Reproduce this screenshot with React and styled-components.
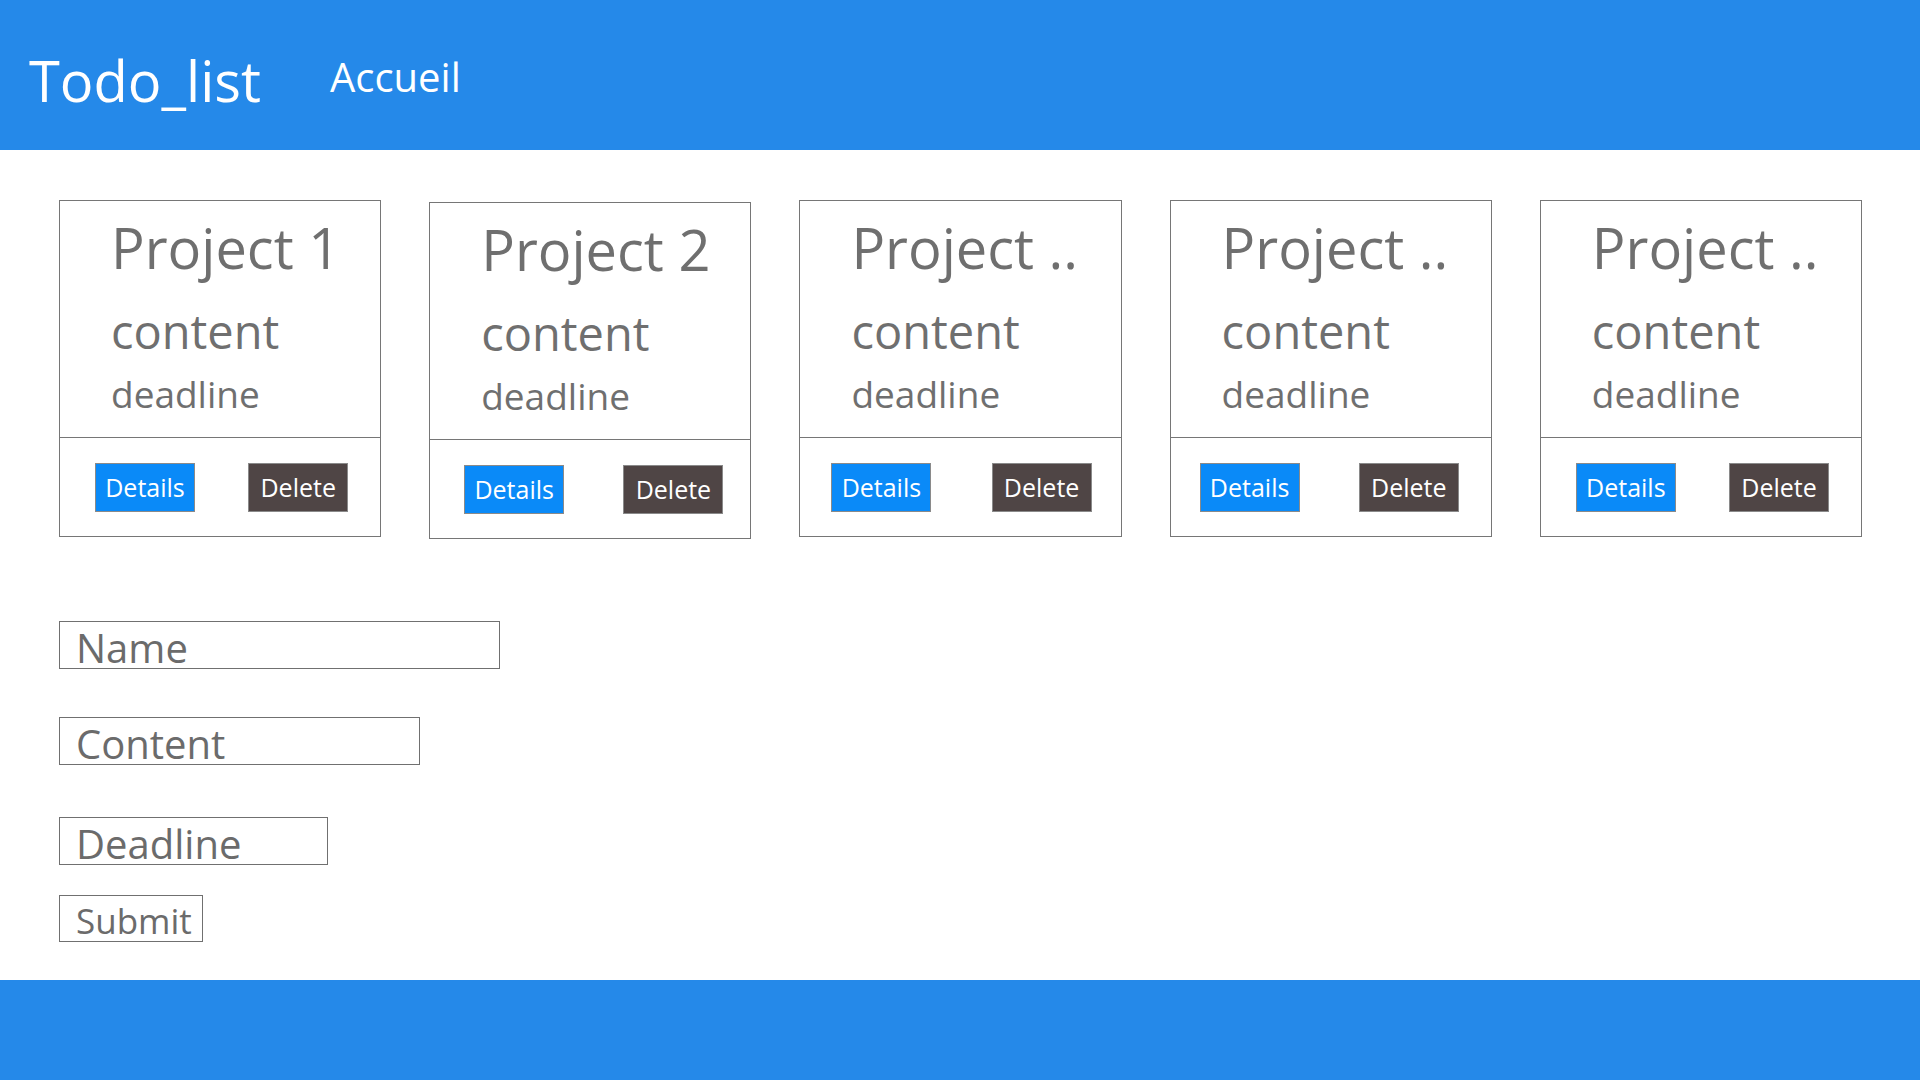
import React from 'react';
import styled, { createGlobalStyle } from 'styled-components';

const GlobalStyle = createGlobalStyle`
  html, body {
    margin: 0;
    padding: 0;
    background: #ffffff;
    font-family: "Open Sans", "Noto Sans", sans-serif;
  }
  * {
    box-sizing: border-box;
  }
`;

const Page = styled.div`
  display: flex;
  flex-direction: column;
  min-height: 100vh;
`;

const Header = styled.header`
  display: flex;
  align-items: flex-start;
  gap: 69px;
  height: 150px;
  padding: 52px 0 0 29px;
  background-color: #2589e9;
  color: white;
`;

const Brand = styled.div`
  font-size: 56px;
  line-height: 1;
`;

const NavLink = styled.a`
  margin-top: 5px;
  font-size: 40px;
  line-height: 1;
  color: white;
  text-decoration: none;
`;

const Main = styled.main`
  flex-grow: 1;
  padding: 50px 58px 0 59px;
`;

const CardRow = styled.div`
  display: flex;
  gap: 48px;
  align-items: flex-start;
`;

const Card = styled.div`
  width: 323px;
  margin-top: ${(p) => p.$offset || 0}px;
  border: 1px solid #767676;
  color: #6f6f6f;
`;

const CardBody = styled.div`
  display: flex;
  flex-direction: column;
  height: 237px;
  padding-left: 51px;
  border-bottom: 1px solid #767676;
`;

const Title = styled.div`
  margin-top: 17px;
  font-size: 56px;
  line-height: 58px;
`;

const Content = styled.div`
  margin-top: 31px;
  font-size: 47px;
  line-height: 48px;
`;

const Deadline = styled.div`
  margin-top: 19px;
  font-size: 37px;
  line-height: 39px;
`;

const CardActions = styled.div`
  display: flex;
  justify-content: space-between;
  align-items: center;
  height: 98px;
  padding: 0 ${(p) => p.$right}px 0 ${(p) => p.$left}px;
`;

const ActionButton = styled.button`
  width: 100px;
  height: 49px;
  padding: 0;
  border: 1px solid #8a8a8a;
  background-color: ${(p) => (p.$danger ? '#4f4545' : '#0a8af8')};
  color: white;
  font-family: inherit;
  font-size: 25px;
  line-height: 1;
  cursor: pointer;
`;

const Form = styled.form`
  display: flex;
  flex-direction: column;
  align-items: flex-start;
  margin-top: 82px;
`;

const Input = styled.input`
  width: ${(p) => p.$width}px;
  height: 48px;
  margin-top: ${(p) => p.$space || 0}px;
  padding: 5px 16px 0;
  border: 1px solid #707070;
  border-radius: 0;
  outline: none;
  font-family: inherit;
  font-size: 40px;
  line-height: 40px;
  color: #6b6b6b;

  &::placeholder {
    color: #6b6b6b;
    opacity: 1;
  }
`;

const SubmitButton = styled.button`
  width: 144px;
  height: 47px;
  margin-top: 30px;
  padding: 4px 0 0 16px;
  border: 1px solid #707070;
  background: white;
  text-align: left;
  font-family: inherit;
  font-size: 35px;
  line-height: 40px;
  color: #6b6b6b;
`;

const Footer = styled.footer`
  height: 100px;
  background-color: #2589e9;
`;

const projects = [
  { title: 'Project 1', left: 35, right: 32 },
  { title: 'Project 2', offset: 2, left: 34, right: 27 },
  { title: 'Project ..', left: 31, right: 29 },
  { title: 'Project ..', left: 29, right: 32 },
  { title: 'Project ..', left: 35, right: 32 },
];

const App = () => {
  return (
    <Page>
      <GlobalStyle />
      <Header>
        <Brand>Todo_list</Brand>
        <NavLink href="#">Accueil</NavLink>
      </Header>
      <Main>
        <CardRow>
          {projects.map((project, i) => (
            <Card key={i} $offset={project.offset}>
              <CardBody>
                <Title>{project.title}</Title>
                <Content>content</Content>
                <Deadline>deadline</Deadline>
              </CardBody>
              <CardActions $left={project.left} $right={project.right}>
                <ActionButton>Details</ActionButton>
                <ActionButton $danger>Delete</ActionButton>
              </CardActions>
            </Card>
          ))}
        </CardRow>
        <Form onSubmit={(e) => e.preventDefault()}>
          <Input placeholder="Name" $width={441} />
          <Input placeholder="Content" $width={361} $space={48} />
          <Input placeholder="Deadline" $width={269} $space={52} />
          <SubmitButton type="submit">Submit</SubmitButton>
        </Form>
      </Main>
      <Footer />
    </Page>
  );
};

export default App;
